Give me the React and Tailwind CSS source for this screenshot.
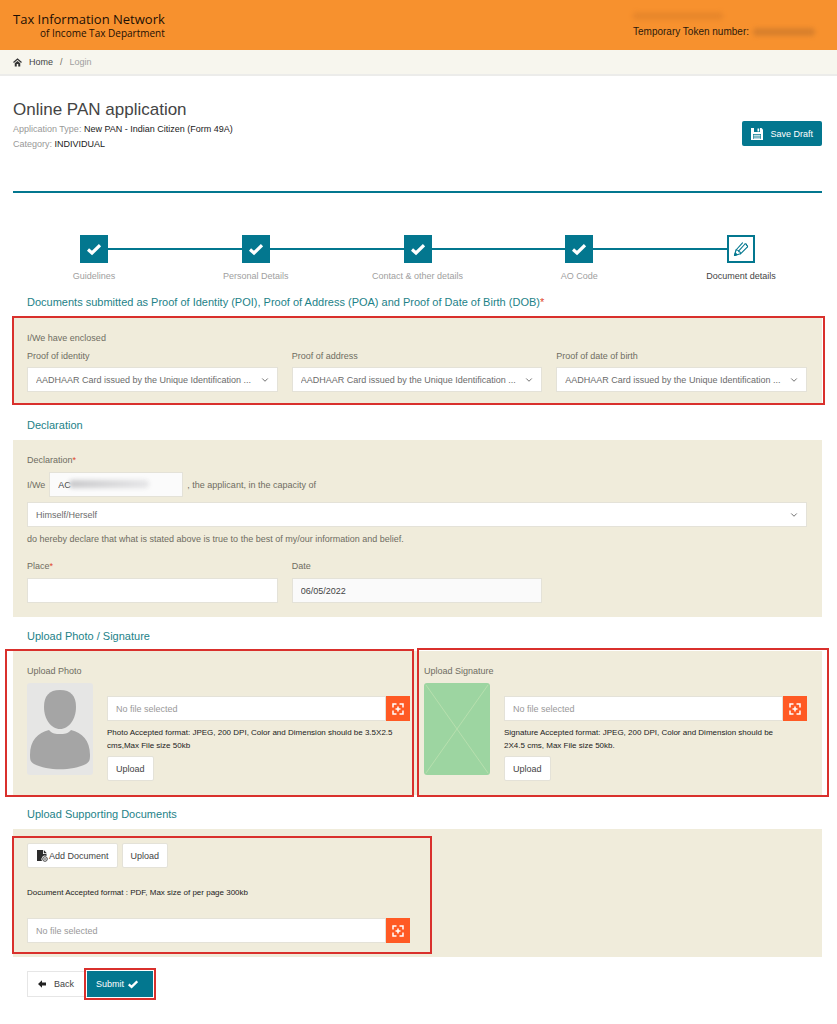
import { FiChevronDown } from 'react-icons/fi';

const STEPS = [
  { label: 'Guidelines', done: true },
  { label: 'Personal Details', done: true },
  { label: 'Contact & other details', done: true },
  { label: 'AO Code', done: true },
  { label: 'Document details', done: false },
];

const PROOFS = [
  { id: 'poi', label: 'Proof of identity' },
  { id: 'poa', label: 'Proof of address' },
  { id: 'dob', label: 'Proof of date of birth' },
];

const AADHAAR = 'AADHAAR Card issued by the Unique Identification ...';

function HomeIcon() {
  return (
    <svg className="w-[9px] h-[9px] text-[#333]" viewBox="0 0 18 18" fill="none" stroke="currentColor">
      <path d="M1 9l8-7 8 7" strokeWidth="2.6" />
      <path d="M3.500 10.500L9 5.800l5.500 4.700V17h-4v-5h-3v5h-4z" fill="currentColor" stroke="none" />
    </svg>
  );
}

function CheckIcon({ className }) {
  return (
    <svg className={className} viewBox="0 0 14 14" fill="none" stroke="currentColor" strokeWidth="3.200">
      <path d="M1 7.500l4 3.500 8-7.800" />
    </svg>
  );
}

function SaveIcon() {
  return (
    <svg className="w-3 h-3" viewBox="0 0 12 12">
      <path d="M0 0h10.500L12 1.500V12H0z" fill="#fff" />
      <path d="M3 0h6v4H3z" fill="#03778f" />
      <path d="M6.500 .5h1.700v3H6.500z" fill="#fff" />
      <path d="M2 6h8v5H2z" fill="#03778f" />
      <path d="M2.500 6.800h7v1h-7zM2.500 8.500h7v1h-7zM2.500 10.200h7v.8h-7z" fill="#fff" />
    </svg>
  );
}

function BackIcon() {
  return (
    <svg className="w-2 h-2 text-[#222]" viewBox="0 0 8 8" fill="currentColor">
      <path d="M0 4l4-3.700v2.200h4v3H4v2.200z" />
    </svg>
  );
}

function PencilIcon() {
  return (
    <svg className="w-4 h-4 text-[#03778f]" viewBox="0 0 16 16" fill="none" stroke="currentColor" strokeWidth="1.100" strokeLinejoin="round" strokeLinecap="round">
      <path d="M1.500 14.500L3 9 9.500 1.800" />
      <path d="M5.800 9.800L12 3" />
      <path d="M1.500 14.500L7.500 12.800 14.500 5.800" />
      <path d="M3 9c2-.2 2.800.6 2.800 1.600 1 0 1.900.8 1.700 2.200" />
      <path d="M12 3c1.300-.5 1.800.5 1.500 1.300.9.200 1.200.8 1 1.500" />
      <path d="M1.500 14.500l.8-2.500 1.700 1.700z" fill="currentColor" />
    </svg>
  );
}

function BrowseIcon() {
  return (
    <svg className="w-3 h-3" viewBox="0 0 12 12" fill="none" stroke="currentColor" strokeWidth="1.500">
      <path d="M1 4.500V1h3.500M7.500 1H11v3.500M11 7.500V11H7.500M4.500 11H1V7.500M6 3.500v5M3.500 6h5" />
    </svg>
  );
}

function AddFileIcon() {
  return (
    <svg className="w-3 h-3" viewBox="0 0 12 12">
      <path d="M1 0h6v4h3.500v2A3.500 3.500 0 0 0 6 11H1z" fill="#2c2c2c" />
      <path d="M7.800 0v3.200h3z" fill="#2c2c2c" />
      <circle cx="9" cy="9" r="2.300" fill="none" stroke="#444" strokeWidth="1" />
      <path d="M7.800 9h2.400" stroke="#444" strokeWidth="1" />
    </svg>
  );
}

function Avatar() {
  return (
    <svg className="w-[66px] h-[92px] shrink-0" viewBox="0 0 66 92" role="img" aria-label="Photo placeholder">
      <rect width="66" height="92" rx="3" fill="#e6e6e5" />
      <path d="M33 7c11 0 16 6 16 17 0 12-7 22-16 22s-16-10-16-22C17 13 22 7 33 7z" fill="#a5a5a5" />
      <path d="M22 47c3 4 7 4 11 4s8 0 11-4c11 3 19 10 19 25 0 6-1 7-4 9-14 7-38 7-52 0-3-2-4-3-4-9 0-15 8-22 19-25z" fill="#a5a5a5" />
    </svg>
  );
}

function SignatureBox() {
  return (
    <svg className="w-[66px] h-[92px] shrink-0" viewBox="0 0 66 92" role="img" aria-label="Signature placeholder">
      <rect width="66" height="92" rx="3" fill="#9dd5a1" />
      <path d="M2 2l62 88M64 2L2 90" stroke="#b7dfae" strokeWidth="1" />
    </svg>
  );
}

// red marker frame laid over the area to fill in
function Marker({ className }) {
  return <div className={`absolute border-2 border-[#d9302c] pointer-events-none ${className}`} />;
}

function SectionTitle({ children }) {
  return <h2 className="mt-[11px] mb-[7px] px-3.5 text-[11px] leading-4 text-[#1d8288]">{children}</h2>;
}

function Select({ id, label, value }) {
  return (
    <div className="relative">
      <select
        id={id}
        aria-label={label}
        className="block w-full h-[25px] pl-2 pr-6 appearance-none bg-white border border-[#e4e2d8] text-[#6b6b6b]"
      >
        <option>{value}</option>
      </select>
      <FiChevronDown className="absolute right-2 top-2 w-2.5 h-2.5 text-[#555] pointer-events-none" />
    </div>
  );
}

function Button({ children, className = '' }) {
  return (
    <button type="button" className={`h-[25px] px-2 bg-white border border-[#e4e2d8] rounded-xs text-[#444] ${className}`}>
      {children}
    </button>
  );
}

function FilePicker({ label }) {
  return (
    <div className="flex h-[25px]">
      <input
        type="text"
        readOnly
        aria-label={label}
        placeholder="No file selected"
        className="flex-1 min-w-0 px-2 bg-white border border-[#e4e2d8] placeholder:text-[#999]"
      />
      <button type="button" aria-label="Browse" className="w-6 flex items-center justify-center bg-[#ff5a24] text-white">
        <BrowseIcon />
      </button>
    </div>
  );
}

function UploadField({ title, picture, children, marker }) {
  return (
    <div className="relative pt-[13px] pb-3.5">
      <p>{title}</p>
      <div className="flex items-start gap-[14px] mt-[5px]">
        {picture}
        <div className="flex-1 min-w-0 pt-[13px]">
          <FilePicker label={title} />
          <p className="mt-[5px] text-[8px] leading-[13px] text-[#222]">{children}</p>
          <Button className="mt-1">Upload</Button>
        </div>
      </div>
      <Marker className={marker} />
    </div>
  );
}

function Step({ step, first, last }) {
  return (
    <li className="flex-1">
      <div className="flex items-center">
        <span className={`flex-1 h-0.5 ${first ? '' : 'bg-[#03778f]'}`} />
        <span
          className={`w-7 h-7 flex items-center justify-center border-2 border-[#03778f] ${
            step.done ? 'bg-[#03778f] text-white' : 'bg-white'
          }`}
        >
          {step.done ? <CheckIcon className="w-3.5 h-3.5" /> : <PencilIcon />}
        </span>
        <span className={`flex-1 h-0.5 ${last ? '' : 'bg-[#03778f]'}`} />
      </div>
      <p className={`mt-1.5 text-center ${step.done ? 'text-[#a0a0a0]' : 'text-[#444]'}`}>{step.label}</p>
    </li>
  );
}

export default function App() {
  return (
    <div className="min-h-screen bg-white text-[9px] leading-[14px] text-[#6f6c62] font-['Liberation_Sans',Arial,sans-serif]">
      <header className="h-[50px] flex items-start justify-between bg-[#f7912e] pl-[13px] pr-[22px] text-[#2b1a0c]">
        <div className="pt-[11px] text-right font-['Open_Sans',sans-serif] text-[#1c0f05]">
          <p className="text-[13px] leading-4 font-medium">Tax Information Network</p>
          <p className="text-[10px] leading-3 font-medium">of Income Tax Department</p>
        </div>
        <div className="pt-3">
          <div className="w-[90px] h-2 mb-[5px] rounded-full bg-[#e8872b] blur-[2px]" />
          <div className="flex items-center gap-1 text-[10px]">
            Temporary Token number:
            <span className="w-[62px] h-2 rounded-full bg-[#d9802c] blur-[2px]" />
          </div>
        </div>
      </header>

      <nav className="h-[26px] flex items-center gap-[7px] px-[13px] bg-[#f7f6ee] border-b-2 border-[#ececea]">
        <HomeIcon />
        <a href="#home" className="text-[#444]">Home</a>
        <span>/</span>
        <a href="#login" className="text-[#a0a0a0]">Login</a>
      </nav>

      <main className="pl-[13px] pr-[15px] pb-6">
        <div className="flex items-end justify-between pt-[22px] pb-[39px] border-b-2 border-[#03778f]">
          <div className="leading-[15px] text-[#999]">
            <h1 className="text-[17px] leading-6 text-[#444]">Online PAN application</h1>
            <p>
              Application Type: <span className="text-[#222]">New PAN - Indian Citizen (Form 49A)</span>
            </p>
            <p>
              Category: <span className="text-[#222]">INDIVIDUAL</span>
            </p>
          </div>
          <button type="button" className="h-[25px] mb-1.5 px-[9px] flex items-center gap-[7px] rounded-xs bg-[#03778f] text-white">
            <SaveIcon />
            Save Draft
          </button>
        </div>

        <ol className="flex pt-[42px]">
          {STEPS.map((step, i) => (
            <Step key={step.label} step={step} first={i === 0} last={i === STEPS.length - 1} />
          ))}
        </ol>

        <SectionTitle>
          Documents submitted as Proof of Identity (POI), Proof of Address (POA) and Proof of Date of Birth (DOB)
          <span className="text-[#e0452c]">*</span>
        </SectionTitle>
        <section className="relative mb-3.5 pt-3.5 pb-[11px] pl-3.5 pr-[15px] bg-[#f0ecdb]">
          <p>I/We have enclosed</p>
          <div className="grid grid-cols-3 gap-3.5 mt-1">
            {PROOFS.map((proof) => (
              <div key={proof.id}>
                <label htmlFor={proof.id} className="block mb-1">{proof.label}</label>
                <Select id={proof.id} value={AADHAAR} />
              </div>
            ))}
          </div>
          <Marker className="-left-px -right-[3px] -top-px -bottom-[2px]" />
        </section>

        <SectionTitle>Declaration</SectionTitle>
        <section className="pt-[13px] pb-3.5 pl-3.5 pr-[15px] bg-[#f0ecdb]">
          <p>
            Declaration<span className="text-[#e0452c]">*</span>
          </p>
          <div className="flex items-center gap-1 mt-[5px] mb-[5px]">
            <label htmlFor="applicant">I/We</label>
            <div className="relative">
              <input
                id="applicant"
                type="text"
                readOnly
                value="AC"
                className="block w-[134px] h-[25px] px-2 bg-[#fbfbfb] border border-[#e4e2d8] text-[#444]"
              />
              <span className="absolute left-5 top-2 w-20 h-2 rounded-full bg-linear-to-r from-[#c9c9cb] to-[#e6e6e8] blur-[2px]" />
            </div>
            <span>, the applicant, in the capacity of</span>
          </div>
          <Select id="capacity" label="Capacity" value="Himself/Herself" />
          <p className="mt-[5px]">do hereby declare that what is stated above is true to the best of my/our information and belief.</p>
          <div className="grid grid-cols-3 gap-3.5 mt-[13px]">
            <div>
              <label htmlFor="place" className="block mb-[5px]">
                Place<span className="text-[#e0452c]">*</span>
              </label>
              <input id="place" type="text" className="block w-full h-[25px] px-2 bg-white border border-[#e4e2d8]" />
            </div>
            <div>
              <label htmlFor="date" className="block mb-[5px]">Date</label>
              <input
                id="date"
                type="text"
                readOnly
                value="06/05/2022"
                className="block w-full h-[25px] px-2 bg-[#fafafa] border border-[#e4e2d8] text-[#444]"
              />
            </div>
          </div>
        </section>

        <SectionTitle>Upload Photo / Signature</SectionTitle>
        <section className="grid grid-cols-2 gap-3.5 pl-3.5 pr-[15px] bg-[#f0ecdb]">
          <UploadField title="Upload Photo" picture={<Avatar />} marker="-left-[22px] -right-1 -top-[2px] -bottom-[2px]">
            Photo Accepted format: JPEG, 200 DPI, Color and Dimension should be 3.5X2.5
            <br />
            cms,Max File size 50kb
          </UploadField>
          <UploadField title="Upload Signature" picture={<SignatureBox />} marker="-left-[7px] -right-[22px] -top-[3px] -bottom-[2px]">
            Signature Accepted format: JPEG, 200 DPI, Color and Dimension should be
            <br />
            2X4.5 cms, Max File size 50kb.
          </UploadField>
        </section>

        <SectionTitle>Upload Supporting Documents</SectionTitle>
        <section className="grid grid-cols-2 gap-3.5 pl-3.5 pr-[15px] bg-[#f0ecdb]">
          <div className="relative pt-3.5 pb-3.5">
            <div className="flex gap-1">
              <Button className="flex items-center gap-px">
                <AddFileIcon />
                Add Document
              </Button>
              <Button>Upload</Button>
            </div>
            <p className="mt-[18px] mb-[18px] text-[8px] text-[#222]">
              Document Accepted format : PDF, Max size of per page 300kb
            </p>
            <FilePicker label="Supporting document" />
            <Marker className="-left-[15px] -right-[22px] top-[7px] bottom-[3px]" />
          </div>
        </section>

        <div className="flex pt-3.5 pl-3.5">
          <button type="button" className="w-[60px] h-[26px] flex items-center gap-2 pl-2.5 border border-[#e6e6e6] border-r-0 text-[#444]">
            <BackIcon />
            Back
          </button>
          <div className="relative">
            <button type="button" className="w-[66px] h-[26px] flex items-center gap-1 pl-[9px] bg-[#03778f] text-white">
              Submit
              <CheckIcon className="w-2.5 h-2.5" />
            </button>
            <Marker className="-inset-[3px]" />
          </div>
        </div>
      </main>
    </div>
  );
}
